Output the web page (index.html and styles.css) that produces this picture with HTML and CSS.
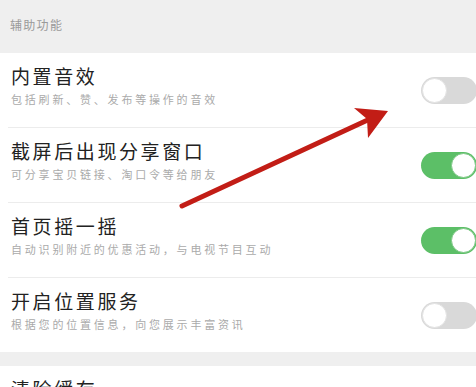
FILE: index.html
```html
<!DOCTYPE html>
<html lang="zh-CN">
<head>
<meta charset="utf-8">
<link rel="stylesheet" href="styles.css">
</head>
<body>
<div class="page">
  <div class="group-title">辅助功能</div>
  <div class="section">
    <div class="row">
      <div class="texts">
        <div class="title">内置音效</div>
        <div class="sub">包括刷新、赞、发布等操作的音效</div>
      </div>
      <div class="toggle"><span class="knob"></span></div>
    </div>
    <div class="row">
      <div class="texts">
        <div class="title">截屏后出现分享窗口</div>
        <div class="sub">可分享宝贝链接、淘口令等给朋友</div>
      </div>
      <div class="toggle on"><span class="knob"></span></div>
    </div>
    <div class="row">
      <div class="texts">
        <div class="title">首页摇一摇</div>
        <div class="sub">自动识别附近的优惠活动，与电视节目互动</div>
      </div>
      <div class="toggle on"><span class="knob"></span></div>
    </div>
    <div class="row">
      <div class="texts">
        <div class="title">开启位置服务</div>
        <div class="sub">根据您的位置信息，向您展示丰富资讯</div>
      </div>
      <div class="toggle"><span class="knob"></span></div>
    </div>
  </div>
  <div class="gap"></div>
  <div class="section">
    <div class="row first">
      <div class="texts">
        <div class="title">清除缓存</div>
      </div>
    </div>
  </div>
  <svg class="arrow" width="476" height="387" viewBox="0 0 476 387">
    <line x1="182" y1="206" x2="372" y2="118" stroke="#c21d16" stroke-width="5" stroke-linecap="round"/>
    <polygon points="388,111 354,108 367,119 368,138" fill="#c21d16"/>
  </svg>
</div>
</body>
</html>
```
FILE: styles.css
```css
html, body {
  margin: 0;
  padding: 0;
}
body {
  background: #efefef;
  font-family: "Noto Sans CJK SC", "Noto Sans", sans-serif;
  overflow: hidden;
}
.page {
  position: relative;
  width: 476px;
  height: 387px;
  overflow: hidden;
}
.group-title {
  height: 53px;
  box-sizing: border-box;
  padding: 17px 0 0 10px;
  font-size: 12px;
  line-height: 16px;
  color: #9a9a9a;
  letter-spacing: 1.3px;
}
.section {
  background: #fff;
  padding-left: 8px;
}
.row {
  display: flex;
  align-items: center;
  height: 75px;
  box-sizing: border-box;
  border-top: 1px solid #ececec;
  padding-left: 3px;
}
.row:first-child {
  border-top: none;
  height: 74px;
}
.texts {
  flex: 1;
  align-self: flex-start;
  padding-top: 11px;
}
.title {
  font-size: 19px;
  line-height: 24px;
  color: #222;
  letter-spacing: 2.6px;
}
.sub {
  margin-top: 4px;
  font-size: 11px;
  line-height: 14px;
  color: #aaa;
  letter-spacing: 2.8px;
}
.gap {
  height: 14px;
}
.toggle {
  width: 56px;
  height: 27px;
  box-sizing: border-box;
  border-radius: 14px;
  background: #d9d9d9;
  position: relative;
  margin-right: -1px;
}
.toggle .knob {
  position: absolute;
  left: 1px;
  top: 1px;
  width: 25px;
  height: 25px;
  border-radius: 50%;
  background: #fff;
  box-sizing: border-box;
  border: 1px solid #e2e2e2;
}
.toggle.on {
  background: #5cbf67;
}
.toggle.on .knob {
  left: auto;
  right: 1px;
  border-color: #7cc784;
}
.arrow {
  position: absolute;
  left: 0;
  top: 0;
}
```
